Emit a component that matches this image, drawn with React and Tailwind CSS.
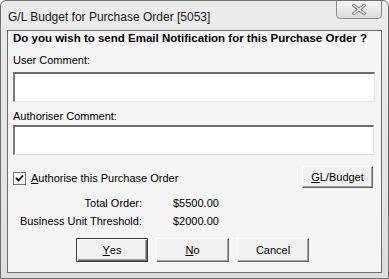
import React from 'react';

const FONT = { fontFamily: '"Liberation Sans", Arial, sans-serif' };

function Btn({ children, def, className = '' }) {
  return (
    <div
      className={`flex items-center justify-center bg-[#f0f0f0] text-[11px] text-black ${
        def
          ? 'border border-[#3c3c3c] shadow-[inset_1px_1px_#ffffff,inset_-1px_-1px_#696969,inset_-2px_-2px_#a0a0a0]'
          : 'border border-t-white border-l-white border-r-[#696969] border-b-[#696969] shadow-[inset_-1px_-1px_#a0a0a0]'
      } ${className}`}
    >
      {children}
    </div>
  );
}

function Field() {
  return (
    <div className="h-[30px] bg-white border-t-2 border-l-2 border-r border-b border-t-[#6d6d6d] border-l-[#7a7a7a] border-r-[#e3e3e3] border-b-[#e3e3e3]" />
  );
}

export default function App() {
  return (
    <div
      className="relative w-[389px] h-[279px] bg-gradient-to-b from-[#ececec] to-[#dedede] border border-[#6e6e6e] rounded-t-[6px] overflow-hidden flex flex-col"
      style={FONT}
    >
      {/* title bar */}
      <div className="h-[29px] flex items-start pl-[7px] pt-[7px] text-[12px] text-[#1a1a1a]">
        G/L Budget for Purchase Order [5053]
      </div>
      <div className="absolute top-[-1px] right-[6px] w-[46px] h-[19px] rounded-b-[4px] border border-[#8c8c8c] bg-gradient-to-b from-[#f7f7f7] to-[#dcdcdc] flex items-center justify-center">
        <svg width="14" height="11" viewBox="0 0 14 11">
          <path d="M2 1.5 L12 9.5 M12 1.5 L2 9.5" stroke="#7a7a7a" strokeWidth="3.4" strokeLinecap="square" />
          <path d="M2 1.5 L12 9.5 M12 1.5 L2 9.5" stroke="#ffffff" strokeWidth="1.4" strokeLinecap="square" />
        </svg>
      </div>

      {/* client area */}
      <div className="mx-[6px] h-[243px] border border-[#6e6e6e] bg-[#f4f4f4] flex flex-col pl-[5px] pr-[6px] text-[11px] text-black">
        <div className="h-[13px] mt-[1px] leading-[13px] font-bold text-[11.5px] whitespace-nowrap">
          Do you wish to send Email Notification for this Purchase Order ?
        </div>
        <div className="h-[13px] mt-[9px] leading-[13px]">User Comment:</div>
        <div className="mt-[5px]">
          <Field />
        </div>
        <div className="h-[13px] mt-[8px] leading-[13px]">Authoriser Comment:</div>
        <div className="mt-[2px] mr-[1px]">
          <Field />
        </div>

        <div className="mt-[11px] h-[22px] flex items-start justify-between">
          <div className="flex items-center mt-[6px] gap-[5px]">
            <div className="w-[13px] h-[13px] bg-white border border-[#707070] flex items-center justify-center">
              <svg width="9" height="9" viewBox="0 0 9 9">
                <path d="M1 4 L3.5 6.5 L8 1.5" stroke="#000" strokeWidth="1.8" fill="none" />
              </svg>
            </div>
            <span className="leading-[13px]">
              <span className="underline">A</span>uthorise this Purchase Order
            </span>
          </div>
          <Btn className="w-[71px] h-[22px] mr-[2px]">
            <span className="underline">G</span>L/Budget
          </Btn>
        </div>

        <div className="mt-[6px] flex h-[18px] items-center">
          <div className="w-[129px] text-right">Total Order:</div>
          <div className="ml-[31px]">$5500.00</div>
        </div>
        <div className="flex h-[18px] items-center">
          <div className="w-[129px] text-right">Business Unit Threshold:</div>
          <div className="ml-[31px]">$2000.00</div>
        </div>

        <div className="mt-[8px] flex gap-[8px] pl-[63px]">
          <Btn def className="w-[72px] h-[24px]">
            <span className="underline">Y</span>es
          </Btn>
          <Btn className="w-[73px] h-[24px]">
            <span className="underline">N</span>o
          </Btn>
          <Btn className="w-[72px] h-[24px]">Cancel</Btn>
        </div>
      </div>
    </div>
  );
}
